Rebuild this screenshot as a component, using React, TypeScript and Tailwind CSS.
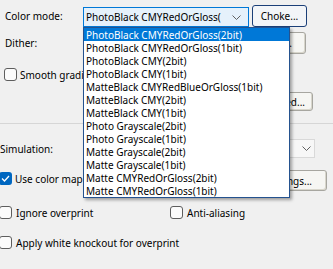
import type { ReactNode } from 'react';

const modes = [
  'PhotoBlack CMYRedOrGloss(2bit)',
  'PhotoBlack CMYRedOrGloss(1bit)',
  'PhotoBlack CMY(2bit)',
  'PhotoBlack CMY(1bit)',
  'MatteBlack CMYRedBlueOrGloss(1bit)',
  'MatteBlack CMY(2bit)',
  'MatteBlack CMY(1bit)',
  'Photo Grayscale(2bit)',
  'Photo Grayscale(1bit)',
  'Matte Grayscale(2bit)',
  'Matte Grayscale(1bit)',
  'Matte CMYRedOrGloss(2bit)',
  'Matte CMYRedOrGloss(1bit)',
];

function Chevron() {
  return (
    <svg width="9" height="5" viewBox="0 0 9 5" className="shrink-0">
      <polyline points="0.5,0.5 4.5,4.5 8.5,0.5" fill="none" stroke="#606060" strokeWidth="1" />
    </svg>
  );
}

function Checkbox({ checked = false }: { checked?: boolean }) {
  return checked ? (
    <span className="grid h-[13px] w-[13px] shrink-0 place-items-center rounded-[3px] bg-[#0067c0]">
      <svg width="9" height="7" viewBox="0 0 9 7">
        <polyline points="1,3.5 3.5,6 8,1" fill="none" stroke="#fff" strokeWidth="1.3" />
      </svg>
    </span>
  ) : (
    <span className="h-[13px] w-[13px] shrink-0 rounded-[3px] border border-[#5d5d5d] bg-[#fbfbfb]" />
  );
}

function Button({ children, className = '' }: { children: ReactNode; className?: string }) {
  return (
    <div
      className={`flex shrink-0 items-center justify-center rounded-[3px] border border-[#a7a6a0] bg-[#f6f6f3] shadow-[inset_-1px_-1px_0_#d8d6cc] ${className}`}
    >
      {children}
    </div>
  );
}

export default function App() {
  return (
    <div className="relative h-[269px] w-[333px] overflow-hidden bg-[#f0f0f0] font-['Noto_Sans',sans-serif] text-[10px] leading-none text-black">
      <div className="mt-[5px] flex h-[22px] items-center">
        <span className="w-[83px] shrink-0 pl-[5px]">Color mode:</span>
        <div className="flex h-[20px] w-[166px] shrink-0 items-center justify-between self-end whitespace-nowrap border border-[#0078d7] bg-[#e5f1fb] pl-[2px] pr-[7px]">
          <span>PhotoBlack CMYRedOrGloss(</span>
          <Chevron />
        </div>
        <div className="ml-[3px] flex h-[22px] w-[55px] shrink-0 items-center justify-center rounded-[3px] border border-[#1b3f78] bg-[#f3f5f8]">
          Choke...
        </div>
      </div>

      <div className="mt-[5px] flex h-[22px] items-center">
        <span className="w-[83px] shrink-0 pl-[5px]">Dither:</span>
        <div className="h-[20px] w-[166px] shrink-0 border border-[#c8c8c8] bg-white" />
        <Button className="ml-[3px] h-[22px] w-[54px]">Edit...</Button>
      </div>

      <div className="mt-[14px] flex h-[13px] items-center pl-[4px]">
        <Checkbox />
        <span className="ml-[3px]">Smooth gradient</span>
      </div>

      <div className="mt-[11px] flex h-[19px] justify-end pr-[20px]">
        <Button className="h-[19px] w-[70px]">Advanced...</Button>
      </div>

      <div className="mt-[12px] border-t border-[#d6d6d6]" />

      <div className="mt-[15px] flex h-[19px] items-center justify-between pr-[18px]">
        <span>Simulation:</span>
        <div className="flex h-[19px] w-[135px] items-center justify-end border border-[#d9d9d9] bg-[#f7f7f7] pr-[3px]">
          <Chevron />
        </div>
      </div>

      <div className="mt-[12px] flex h-[21px] items-start justify-between pr-[6px]">
        <div className="ml-[-1px] mt-[2px] flex items-center">
          <Checkbox checked />
          <span className="ml-[3px]">Use color map</span>
        </div>
        <Button className="h-[21px] w-[76px]">Settings...</Button>
      </div>

      <div className="mt-[15px] flex h-[13px] items-center">
        <div className="ml-[-1px] flex w-[171px] items-center">
          <Checkbox />
          <span className="ml-[4px]">Ignore overprint</span>
        </div>
        <Checkbox />
        <span className="ml-[4px]">Anti-aliasing</span>
      </div>

      <div className="mt-[17px] flex h-[13px] items-center">
        <div className="ml-[-1px] flex items-center">
          <Checkbox />
          <span className="ml-[4px]">Apply white knockout for overprint</span>
        </div>
      </div>

      <div className="absolute left-[83px] top-[27px] w-[207px] border border-[#24528f] bg-white shadow-[2px_2px_3px_rgba(0,0,0,0.35)]">
        {modes.map((mode, i) => (
          <div
            key={mode}
            className={`flex h-[13px] items-center whitespace-nowrap pl-[2px] ${
              i === 0 ? 'bg-[#0078d7] text-white' : ''
            }`}
          >
            {mode}
          </div>
        ))}
      </div>
    </div>
  );
}
